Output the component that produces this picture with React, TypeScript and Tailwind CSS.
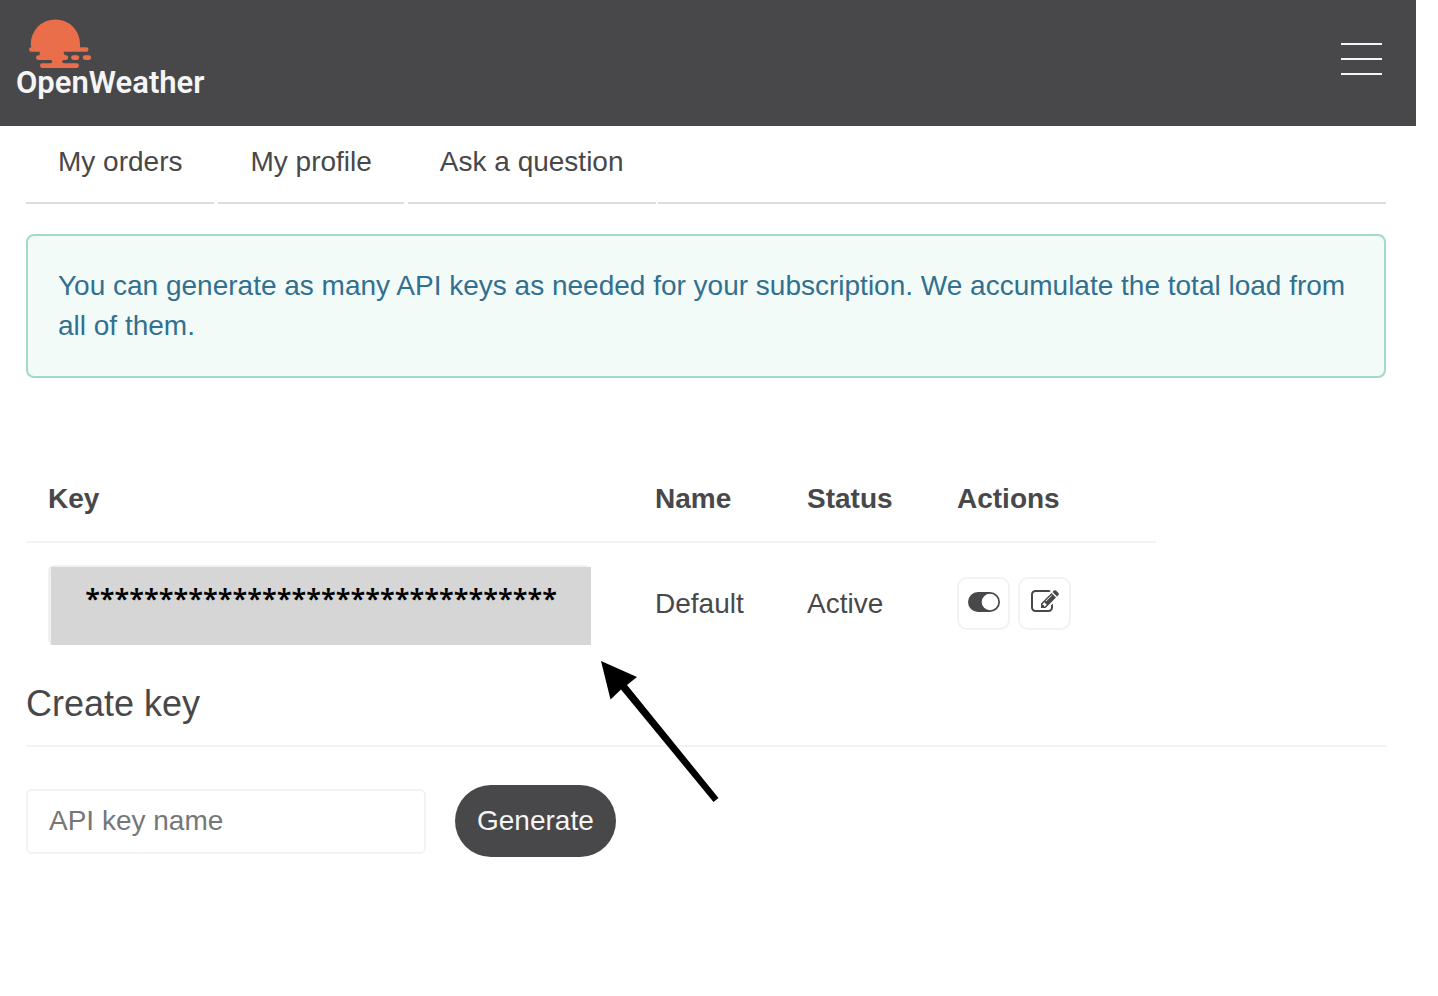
import React from "react";

const tabs = ["My orders", "My profile", "Ask a question"];

function Logo() {
  return (
    <a href="#" aria-label="OpenWeather" className="flex flex-col">
      <svg viewBox="0 0 64 50" className="ml-3 h-[50px] w-16 fill-[#eb6e4b]" aria-hidden="true">
        <path d="M3.300 29.300Q2.800 27.500 2.800 26A24.600 24.600 0 0 1 52 26V29.300H58.300A2.200 2.200 0 0 1 58.300 33.700H35.700V34.500Q35.700 37.200 38 37.300A2.300 2.300 0 0 1 38 41.900H36Q34.200 42 34.200 43.500T36 45.300H48.700A2.300 2.300 0 0 1 48.700 49.900H14.300A2.300 2.300 0 0 1 14.300 45.300H22.500Q24.300 45 24.300 43.500T22.500 41.900H10.300A2.300 2.300 0 0 1 10.300 37.300H11.700V33.700H3.200A2.200 2.200 0 0 1 3.300 29.300Z" />
        <rect x="43" y="37.300" width="8.300" height="4.600" rx="2.300" />
        <rect x="54.700" y="37.300" width="8.500" height="4.600" rx="2.300" />
      </svg>
      <span className="font-['Roboto',sans-serif] text-[31px] leading-[30px] font-semibold text-[#f5f5f5]">
        OpenWeather
      </span>
    </a>
  );
}

function ToggleIcon() {
  return (
    <svg viewBox="0 0 32 20" className="h-5 w-8 fill-[#48484a]" aria-hidden="true">
      <path fillRule="evenodd" d="M10 0H22A10 10 0 0 1 22 20H10A10 10 0 0 1 10 0ZM22 1.700A8.300 8.300 0 1 0 22 18.300A8.300 8.300 0 1 0 22 1.700Z" />
    </svg>
  );
}

function EditIcon() {
  return (
    <svg viewBox="0 0 1792 1792" className="size-7 fill-[#48484a]" aria-hidden="true">
      <path d="M888 1184l116-116-152-152-116 116v56h96v96h56zm440-720q-16-16-33 1l-350 350q-17 17-1 33t33-1l350-350q17-17 1-33zm80 594v190q0 119-84.500 203.500t-203.500 84.500h-832q-119 0-203.500-84.500t-84.500-203.500v-832q0-119 84.500-203.500t203.500-84.500h832q63 0 117 25 15 7 18 23 3 17-9 29l-49 49q-14 14-32 8-23-6-45-6h-832q-66 0-113 47t-47 113v832q0 66 47 113t113 47h832q66 0 113-47t47-113v-126q0-13 9-22l64-64q15-15 35-7t20 29zm-96-738l288 288-672 672h-288v-288zm444 132l-92 92-288-288 92-92q28-28 68-28t68 28l152 152q28 28 28 68t-28 68z" />
    </svg>
  );
}

function IconButton({ label, children }: { label: string; children: React.ReactNode }) {
  return (
    <button
      type="button"
      aria-label={label}
      className="flex size-[53px] items-center justify-center rounded-[10px] border-2 border-[#f2f2f2] bg-white pb-[3px]"
    >
      {children}
    </button>
  );
}

function KeysTable() {
  return (
    <table className="mt-[81px] w-[1130px] max-w-full table-fixed border-collapse text-left">
      <colgroup>
        <col className="w-[607px]" />
        <col className="w-[152px]" />
        <col className="w-[150px]" />
        <col />
      </colgroup>
      <thead>
        <tr className="border-b-2 border-[#f2f2f2]">
          <th className="px-[22px] pt-5 pb-[22px]">Key</th>
          <th className="px-[22px] pt-5 pb-[22px]">Name</th>
          <th className="px-[22px] pt-5 pb-[22px]">Status</th>
          <th className="px-[22px] pt-5 pb-[22px]">Actions</th>
        </tr>
      </thead>
      <tbody>
        <tr>
          <td className="px-[22px] pt-[22px] pb-2">
            <div className="w-[543px] rounded-md border-t-2 border-l-[3px] border-[#f0f0f0]">
              <div className="bg-[#d6d6d6] pt-[14px] pb-7 text-center font-['Noto_Sans',sans-serif] text-[27px] leading-9 font-semibold text-black">
                ********************************
              </div>
            </div>
          </td>
          <td className="px-[22px] pt-5 pb-2">Default</td>
          <td className="px-[22px] pt-5 pb-2">Active</td>
          <td className="px-[22px] pt-5 pb-[10px]">
            <div className="flex gap-2">
              <IconButton label="Toggle key">
                <ToggleIcon />
              </IconButton>
              <IconButton label="Edit key name">
                <EditIcon />
              </IconButton>
            </div>
          </td>
        </tr>
      </tbody>
    </table>
  );
}

export default function App() {
  return (
    <div className="relative min-h-screen bg-white pr-[22px] font-['Liberation_Sans',Arial,sans-serif] text-[28px] leading-10 text-[#48484a]">
      <header className="flex h-[126px] items-start justify-between bg-[#48484a] pt-[18px] pr-8 pl-4">
        <Logo />
        <button type="button" aria-label="Open menu" className="mt-[21px] flex flex-col gap-[13px] p-[2px] pt-1">
          <span className="h-[2px] w-[41px] bg-[#f5f5f5]" />
          <span className="h-[2px] w-[41px] bg-[#f5f5f5]" />
          <span className="h-[2px] w-[41px] bg-[#f5f5f5]" />
        </button>
      </header>

      <main className="pr-[30px] pl-[26px]">
        <nav>
          <ul className="flex gap-1 after:-ml-[2px] after:flex-1 after:border-b-2 after:border-[#ddd] after:content-['']">
            {tabs.map((tab) => (
              <li key={tab} className="border-b-2 border-[#ddd]">
                <a href="#" className="block px-8 pt-4 pb-5">
                  {tab}
                </a>
              </li>
            ))}
          </ul>
        </nav>

        <p className="mt-[30px] rounded-lg border-2 border-[#a3d9c8] bg-[#f3fbf9] p-[30px] text-[#31708f]">
          You can generate as many API keys as needed for your subscription. We accumulate the total load from all of
          them.
        </p>

        <KeysTable />

        <section>
          <h2 className="mt-[31px] border-b-2 border-[#f2f2f2] pb-[21px] text-4xl">Create key</h2>
          <form className="mt-[38px] flex items-center gap-[29px]">
            <input
              type="text"
              aria-label="API key name"
              placeholder="API key name"
              className="h-[65px] w-[400px] rounded-md border-2 border-[#f2f2f2] px-[21px] placeholder:text-[#777]"
            />
            <button type="button" className="rounded-full bg-[#48484a] px-[22px] py-4 text-[#f5f5f5]">
              Generate
            </button>
          </form>
        </section>
      </main>

      <svg viewBox="0 0 120 142" className="absolute top-[660px] left-[600px] h-[142px] w-[120px] fill-black" aria-hidden="true">
        <path d="M1 1L37 17L27 25L118.500 138L113.500 142L21 29.500L10.500 39.500Z" />
      </svg>
    </div>
  );
}
